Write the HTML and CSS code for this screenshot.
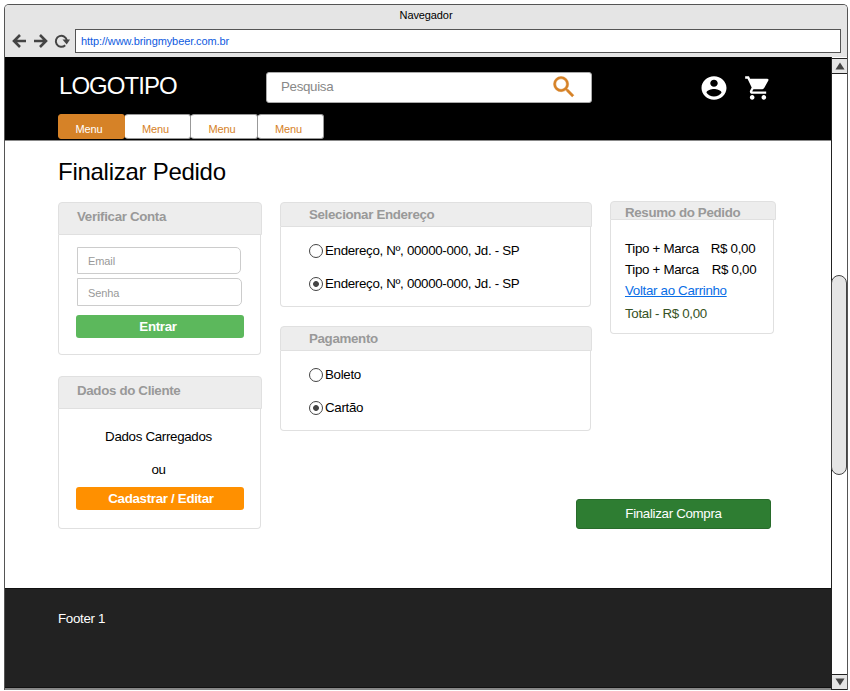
FILE: index.html
```html
<!DOCTYPE html>
<html lang="pt-BR">
<head>
<meta charset="utf-8">
<title>Navegador</title>
<link rel="stylesheet" href="styles.css">
</head>
<body>
<div class="window">
  <div class="chrome">
    <div class="title">Navegador</div>
    <div class="toolbar">
      <svg class="nav" width="60" height="18" viewBox="0 0 60 18" fill="none" stroke="#444" stroke-width="2.600">
        <path d="M15 9H4M9 3L3 9l6 6"/>
        <path d="M23 9H34M29 3L35 9l-6 6"/>
        <path d="M54.200 13.200A5.500 5.500 0 1 1 55.800 8.500" stroke-width="2"/>
        <path d="M51.500 7.500h7.500l-3.300 5z" fill="#444" stroke="none"/>
      </svg>
      <div class="url">http://www.bringmybeer.com.br</div>
    </div>
  </div>
  <div class="viewport">
    <div class="page">
      <header class="header">
        <div class="top">
          <div class="logo">LOGOTIPO</div>
          <div class="search">
            <span>Pesquisa</span>
            <svg width="28" height="28" viewBox="0 0 24 24" fill="#d68227" stroke="#d68227" stroke-width=".4"><path d="M15.500 14h-.79l-.28-.27A6.471 6.471 0 0 0 16 9.500 6.500 6.500 0 1 0 9.500 16c1.610 0 3.090-.59 4.230-1.570l.27.28v.79l5 4.990L20.490 19l-4.990-5zm-6 0C7.010 14 5 11.990 5 9.500S7.010 5 9.500 5 14 7.010 14 9.500 11.990 14 9.500 14z"/></svg>
          </div>
          <div class="actions">
            <svg width="30" height="28" viewBox="0 0 24 24" preserveAspectRatio="none" fill="#fff"><path d="M12 2C6.480 2 2 6.480 2 12s4.480 10 10 10 10-4.480 10-10S17.520 2 12 2zm0 3c1.660 0 3 1.340 3 3s-1.340 3-3 3-3-1.340-3-3 1.340-3 3-3zm0 14.200c-2.500 0-4.710-1.280-6-3.220.03-1.990 4-3.080 6-3.080 1.990 0 5.970 1.090 6 3.080-1.290 1.940-3.500 3.220-6 3.220z"/></svg>
            <svg width="28" height="28" viewBox="0 0 24 24" preserveAspectRatio="none" fill="#fff"><path d="M7 18c-1.100 0-1.990.9-1.990 2S5.900 22 7 22s2-.9 2-2-.9-2-2-2zM1 2v2h2l3.600 7.590-1.350 2.450c-.16.28-.25.61-.25.96 0 1.100.9 2 2 2h12v-2H7.420c-.14 0-.25-.11-.25-.25l.03-.12.9-1.630h7.450c.75 0 1.410-.41 1.750-1.030l3.580-6.490A1 1 0 0 0 20 4H5.210l-.94-2H1zm16 16c-1.100 0-1.990.9-1.990 2s.89 2 1.990 2 2-.9 2-2-.9-2-2-2z"/></svg>
          </div>
        </div>
        <nav class="tabs">
          <a class="tab active">Menu</a><a class="tab">Menu</a><a class="tab">Menu</a><a class="tab">Menu</a>
        </nav>
      </header>
      <main class="main">
        <h1>Finalizar Pedido</h1>
        <div class="columns">
          <div class="col account">
            <section class="card">
              <h2>Verificar Conta</h2>
              <div class="body login">
                <div class="field">Email</div>
                <div class="field second">Senha</div>
                <div class="btn green">Entrar</div>
              </div>
            </section>
            <section class="card">
              <h2>Dados do Cliente</h2>
              <div class="body client">
                <p>Dados Carregados</p>
                <p>ou</p>
                <div class="btn orange">Cadastrar / Editar</div>
              </div>
            </section>
          </div>
          <div class="col options">
            <section class="card">
              <h2>Selecionar Endereço</h2>
              <div class="body">
                <div class="option"><i class="radio"></i>Endereço, Nº, 00000-000, Jd. - SP</div>
                <div class="option"><i class="radio on"></i>Endereço, Nº, 00000-000, Jd. - SP</div>
              </div>
            </section>
            <section class="card">
              <h2>Pagamento</h2>
              <div class="body">
                <div class="option"><i class="radio"></i>Boleto</div>
                <div class="option"><i class="radio on"></i>Cartão</div>
              </div>
            </section>
          </div>
          <div class="col summary">
            <section class="card">
              <h2>Resumo do Pedido</h2>
              <div class="body">
                <div class="line"><span>Tipo + Marca</span><span>R$ 0,00</span></div>
                <div class="line shifted"><span>Tipo + Marca</span><span>R$ 0,00</span></div>
                <a class="back">Voltar ao Carrinho</a>
                <div class="total">Total - R$ 0,00</div>
              </div>
            </section>
            <div class="checkout">Finalizar Compra</div>
          </div>
        </div>
      </main>
      <footer class="footer">Footer 1</footer>
    </div>
    <div class="scrollbar">
      <div class="arrow"><svg width="10" height="8"><path d="M5 0.500L9.500 7.500H.5z" fill="#444"/></svg></div>
      <div class="track"><div class="thumb"></div></div>
      <div class="arrow"><svg width="10" height="8"><path d="M.5.500h9L5 7.500z" fill="#444"/></svg></div>
    </div>
  </div>
</div>
</body>
</html>
```
FILE: styles.css
```css
* { box-sizing: border-box; }
body {
  margin: 0;
  padding: 4px 0 0 4px;
  height: 691px;
  overflow: hidden;
  background: #fff;
  font: 13.330px/16px "Liberation Sans", Arial, sans-serif;
  letter-spacing: -.32px;
  color: #000;
}
h1, h2, p { margin: 0; }
svg { display: block; flex: none; }
.window {
  width: 844px;
  height: 686px;
  border: 1px solid #555;
  border-bottom: 0;
  border-radius: 5px 5px 0 0;
  overflow: hidden;
  display: flex;
  flex-direction: column;
}
.chrome { height: 52px; background: #e5e5e5; }
.title { height: 24px; line-height: 21px; text-align: center; font-size: 11px; letter-spacing: -.1px; }
.toolbar { display: flex; align-items: center; padding: 0 6px; height: 24px; }
.nav { margin-right: 4px; }
.url {
  flex: 1;
  height: 24px;
  border: 1px solid #555;
  background: #fff;
  color: #0f5be0;
  padding-left: 5px;
  font-size: 11px;
  letter-spacing: -.1px;
  line-height: 23px;
}
.viewport { flex: 1; display: flex; min-height: 0; }
.page { width: 826px; display: flex; flex-direction: column; border-bottom: 2px solid #888; }
.header {
  height: 84px;
  flex: none;
  background: #000;
  border-bottom: 1px solid #888;
  padding: 15px 0 0 53px;
}
.top { height: 42px; display: flex; align-items: flex-start; }
.logo { width: 208px; color: #fff; font-size: 24px; letter-spacing: -.95px; line-height: 27px; padding-left: 1px; }
.search {
  width: 326px;
  height: 31px;
  border: 1px solid #aaa;
  border-radius: 3px;
  background: #fff;
  color: #888;
  display: flex;
  justify-content: space-between;
  padding: 0 13px 0 14px;
  line-height: 28px;
}
.actions { display: flex; gap: 15px; padding: 2px 0 0 107px; }
.tabs { display: flex; height: 25px; }
.tab {
  width: 66.500px;
  height: 25px;
  border: 1px solid #999;
  border-left-color: #fff;
  border-radius: 3px;
  background: #fff;
  color: #d68227;
  font-size: 11px;
  letter-spacing: -.1px;
  line-height: 28px;
  padding-left: 16.500px;
}
.tab.active { background: #d68227; border-color: #d68227; color: #fff; }
.main { flex: 1; padding: 16px 0 0 53px; }
h1 { font-size: 24px; letter-spacing: -.27px; line-height: 30px; height: 45px; font-weight: normal; }
.columns { display: flex; gap: 18px; }
.col { display: flex; flex-direction: column; }
.account { width: 204px; gap: 20px; }
.options { width: 312px; gap: 19px; }
.summary { width: 166px; margin-top: -1px; }
.card h2 {
  background: #ededed;
  border: 1px solid #e0e0e0;
  border-radius: 4px 4px 0 0;
  color: #999;
  font-size: 13.330px;
  letter-spacing: -.34px;
  font-weight: bold;
}
.body { border: 1px solid #e0e0e0; border-top: 0; border-radius: 0 0 4px 4px; margin-right: 1px; }
.account h2 { height: 33px; line-height: 28px; padding-left: 18px; }
.account .body { height: 120px; padding: 12px 17px 0; }
.login { margin-bottom: 1px; }
.field {
  width: 164px;
  height: 27px;
  margin-left: 1px;
  border: 1px solid #ccc;
  border-radius: 0 5px 5px 0;
  color: #999;
  font-size: 11px;
  letter-spacing: -.1px;
  line-height: 27px;
  padding-left: 10px;
}
.field.second { width: 165px; height: 28px; margin-top: 4px; line-height: 29px; }
.btn {
  width: 168px;
  height: 23px;
  border-radius: 3px;
  color: #fff;
  font-weight: bold;
  text-align: center;
  line-height: 24px;
}
.green { background: #5cb85c; margin-top: 9px; padding-right: 4px; }
.orange { background: #ff9000; padding-left: 2px; }
.client p { height: 33px; line-height: 31px; text-align: center; padding-right: 2px; }
.options h2 { height: 25px; line-height: 23px; padding-left: 28px; }
.options .body { height: 80px; padding: 7px 0 0 28px; }
.option { display: flex; align-items: center; height: 33px; line-height: 31px; padding-bottom: 1px; gap: 2px; }
.radio {
  width: 14px;
  height: 14px;
  border: 1px solid #444;
  border-radius: 50%;
  background: #fff;
  margin-top: 1px;
}
.radio.on { background: radial-gradient(circle, #444 2.500px, #fff 3.300px); }
.summary h2 { height: 19px; line-height: 21px; padding-left: 14px; }
.summary .body { height: 114px; padding: 18px 0 0 14px; margin-right: 2px; }
.line { display: flex; gap: 12px; height: 21px; line-height: 21px; }
.shifted { gap: 13px; }
.back { display: block; height: 21px; line-height: 21px; color: #0a6ee6; text-decoration: underline; }
.total { height: 26px; line-height: 26px; color: #365224; }
.checkout {
  width: 195px;
  height: 30px;
  margin: 165px 0 0 -34px;
  border: 1px solid #286b2b;
  border-radius: 3px;
  background: #2e7d32;
  color: #fff;
  line-height: 27px;
  text-align: center;
}
.footer {
  height: 100px;
  flex: none;
  background: #222;
  border-top: 1px solid #111;
  border-bottom: 1px solid #111;
  color: #fff;
  padding: 22px 0 0 53px;
}
.scrollbar { width: 16px; border-left: 1px solid #222; display: flex; flex-direction: column; }
.arrow {
  height: 16px;
  flex: none;
  margin-top: 1px;
  border: solid #222;
  border-width: 1px 0;
  background: #e5e5e5;
  display: flex;
  align-items: center;
  justify-content: center;
}
.track { flex: 1; }
.thumb {
  height: 200px;
  margin: 201px 0 0 -1px;
  border: 1px solid #444;
  border-radius: 8px;
  background: #e5e5e5;
}
```
